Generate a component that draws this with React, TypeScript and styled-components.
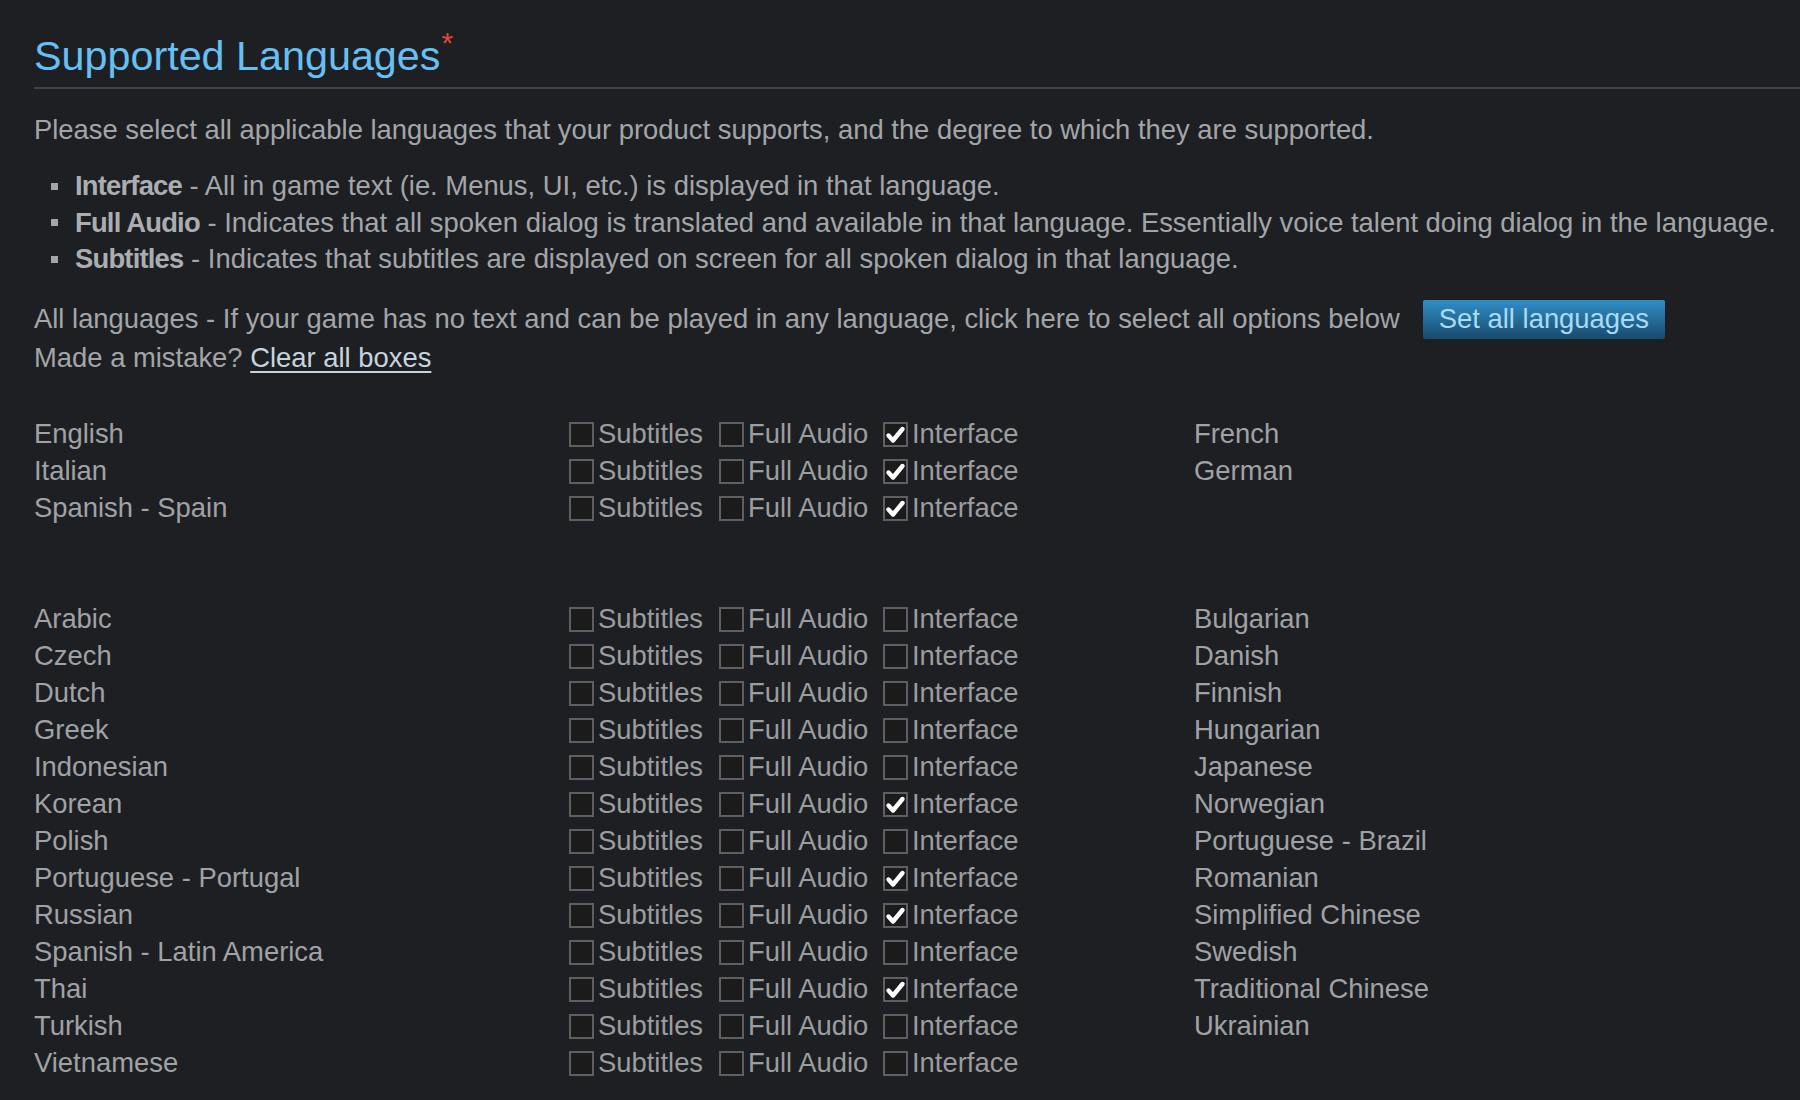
import React from "react";
import styled, { createGlobalStyle } from "styled-components";

const Global = createGlobalStyle`
  html, body { margin: 0; padding: 0; background: #1e1f23; }
  body { font-family: "Liberation Sans", Arial, sans-serif; color: #a3a6a9; }
  * { box-sizing: border-box; }
`;

const TEXT = "27.4px";

const Page = styled.div`
  padding: 31px 0 0 34px;
  min-height: 1100px;
  overflow: hidden;
`;

const Heading = styled.h2`
  margin: 0;
  font-size: 41.3px;
  line-height: 50px;
  font-weight: normal;
  color: #66c0f4;
  padding-bottom: 6px;
  border-bottom: 2px solid #414246;
`;

const Required = styled.sup`
  color: #e0473b;
  font-size: 30px;
  line-height: 1;
  vertical-align: top;
  position: relative;
  top: -3px;
  margin-left: 1px;
`;

const Para = styled.p`
  margin: 22px 0 0 0;
  font-size: ${TEXT};
  line-height: 37px;
`;

const List = styled.ul`
  list-style: none;
  margin: 20px 0 0 0;
  padding: 0;
`;

const Item = styled.li`
  display: flex;
  align-items: center;
  font-size: ${TEXT};
  line-height: 36.5px;
  padding-left: 17px;
  white-space: nowrap;
  &::before {
    content: "";
    width: 7px;
    height: 7px;
    background: #a3a6a9;
    margin-right: 17px;
    flex: none;
  }
`;

const Term = styled.b`
  color: #abaeb1;
  letter-spacing: -0.8px;
`;

const AllRow = styled.div`
  margin-top: 22px;
  display: flex;
  align-items: center;
  height: 39px;
  font-size: ${TEXT};
  white-space: nowrap;
`;

const BlueButton = styled.button`
  margin-left: 23px;
  height: 39px;
  padding: 0 16px;
  border: none;
  border-radius: 2px;
  font-family: inherit;
  font-size: ${TEXT};
  color: #a9dbf7;
  background: linear-gradient(to bottom, #2f8cc2 5%, #1a4d72 95%);
  cursor: pointer;
`;

const MistakeRow = styled.div`
  font-size: ${TEXT};
  line-height: 37px;
`;

const Link = styled.a`
  color: #c6d4df;
  text-decoration: underline;
  text-decoration-thickness: 2px;
  text-underline-offset: 4px;
  cursor: pointer;
`;

const Group = styled.div<{ $top: number }>`
  margin-top: ${(p) => p.$top}px;
`;

const LangRow = styled.div`
  display: grid;
  grid-template-columns: 535px 625px auto;
  align-items: center;
  height: 37px;
  font-size: ${TEXT};
  color: #a0a2a5;
  white-space: nowrap;
`;

const Options = styled.div`
  display: grid;
  grid-template-columns: 150px 164px auto;
  align-items: center;
`;

const Option = styled.label`
  display: flex;
  align-items: center;
  gap: 4px;
  color: #9b9d9f;
`;

const Box = styled.span`
  width: 25px;
  height: 25px;
  border: 2px solid #5e5f61;
  background: #1b1b1c;
  display: flex;
  align-items: center;
  justify-content: center;
  flex: none;
`;

const Check = ({ on }: { on: boolean }) => (
  <Box>
    {on && (
      <svg width="21" height="21" viewBox="0 0 21 21">
        <path
          d="M3.5 11.5 L8 16.5 L17.5 5"
          fill="none"
          stroke="#ffffff"
          strokeWidth="4.4"
          strokeLinecap="round"
          strokeLinejoin="round"
        />
      </svg>
    )}
  </Box>
);

type Row = [string, boolean, string];

const topRows: Row[] = [
  ["English", true, "French"],
  ["Italian", true, "German"],
  ["Spanish - Spain", true, ""],
];

const bottomRows: Row[] = [
  ["Arabic", false, "Bulgarian"],
  ["Czech", false, "Danish"],
  ["Dutch", false, "Finnish"],
  ["Greek", false, "Hungarian"],
  ["Indonesian", false, "Japanese"],
  ["Korean", true, "Norwegian"],
  ["Polish", false, "Portuguese - Brazil"],
  ["Portuguese - Portugal", true, "Romanian"],
  ["Russian", true, "Simplified Chinese"],
  ["Spanish - Latin America", false, "Swedish"],
  ["Thai", true, "Traditional Chinese"],
  ["Turkish", false, "Ukrainian"],
  ["Vietnamese", false, ""],
];

const LanguageRow = ({ row }: { row: Row }) => (
  <LangRow>
    <span>{row[0]}</span>
    <Options>
      <Option>
        <Check on={false} />
        Subtitles
      </Option>
      <Option>
        <Check on={false} />
        Full Audio
      </Option>
      <Option>
        <Check on={row[1]} />
        Interface
      </Option>
    </Options>
    <span>{row[2]}</span>
  </LangRow>
);

export default function App() {
  return (
    <>
      <Global />
      <Page>
        <Heading>
          Supported Languages<Required>*</Required>
        </Heading>
        <Para>
          Please select all applicable languages that your product supports, and the degree to which they are supported.
        </Para>
        <List>
          <Item>
            <Term>Interface</Term>&nbsp;- All in game text (ie. Menus, UI, etc.) is displayed in that language.
          </Item>
          <Item>
            <Term>Full Audio</Term>&nbsp;- Indicates that all spoken dialog is translated and available in that language. Essentially voice talent doing dialog in the language.
          </Item>
          <Item>
            <Term>Subtitles</Term>&nbsp;- Indicates that subtitles are displayed on screen for all spoken dialog in that language.
          </Item>
        </List>
        <AllRow>
          All languages - If your game has no text and can be played in any language, click here to select all options below
          <BlueButton>Set all languages</BlueButton>
        </AllRow>
        <MistakeRow>
          Made a mistake? <Link>Clear all boxes</Link>
        </MistakeRow>
        <Group $top={40}>
          {topRows.map((r) => (
            <LanguageRow key={r[0]} row={r} />
          ))}
        </Group>
        <Group $top={74}>
          {bottomRows.map((r) => (
            <LanguageRow key={r[0]} row={r} />
          ))}
        </Group>
      </Page>
    </>
  );
}
